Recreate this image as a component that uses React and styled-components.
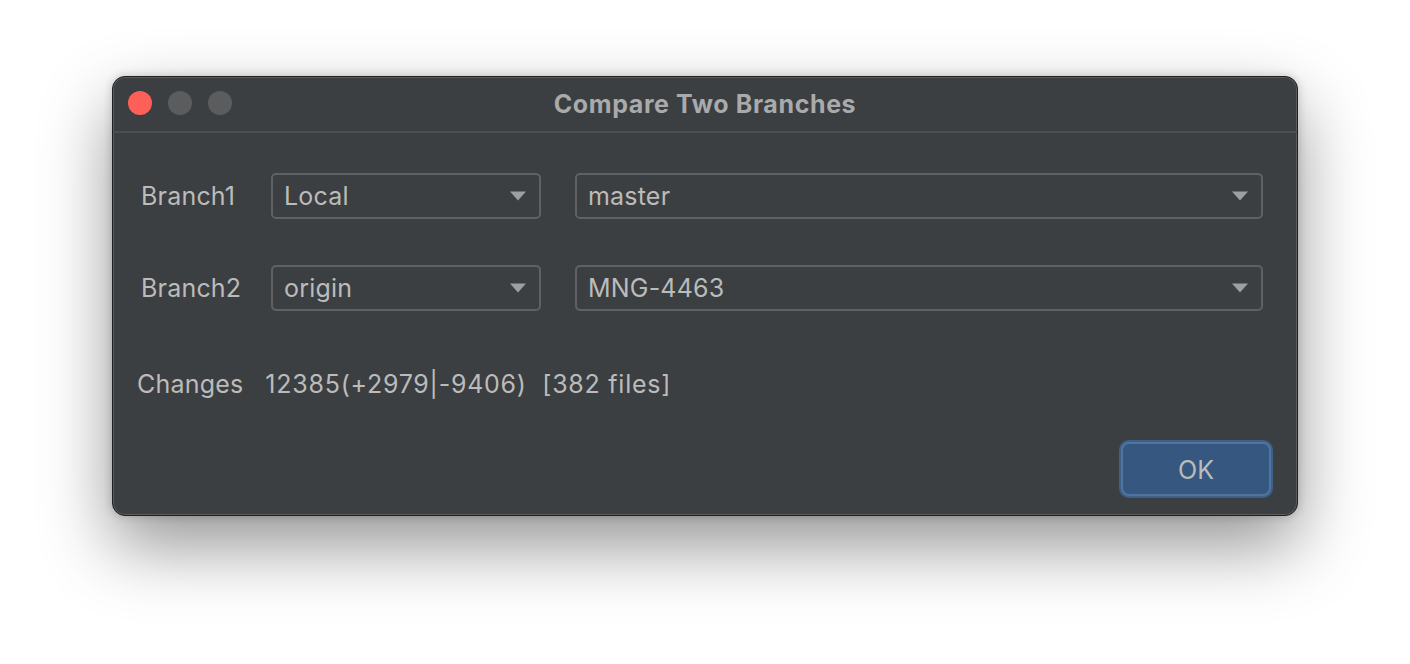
import React from 'react';
import styled, { createGlobalStyle } from 'styled-components';

const GlobalStyle = createGlobalStyle`
  html, body {
    margin: 0;
    padding: 0;
    background: #ffffff;
  }
  body {
    font-family: Inter, "Noto Sans", "Liberation Sans", sans-serif;
  }
`;

function Combo({ value }) {
  return (
    <ComboBox>
      <ComboValue>{value}</ComboValue>
      <Arrow viewBox="0 0 18 10">
        <path d="M1 0.5 H17 L9 9.5 Z" fill="#9c9fa3" />
      </Arrow>
    </ComboBox>
  );
}

function App() {
  return (
    <Page>
      <GlobalStyle />
      <Window>
        <TitleBar>
          <Lights>
            <Light color="#fe5f57" />
            <Light color="#5b5c5e" />
            <Light color="#5b5c5e" />
          </Lights>
          <Title>Compare Two Branches</Title>
        </TitleBar>
        <Body>
          <Form>
            <Label>Branch1</Label>
            <Combo value="Local" />
            <Combo value="master" />
            <Label>Branch2</Label>
            <Combo value="origin" />
            <Combo value="MNG-4463" />
          </Form>
          <Changes>
            <span>Changes</span>
            <span>12385(+2979|-9406)&nbsp;&nbsp;[382 files]</span>
          </Changes>
          <Footer>
            <OkButton>OK</OkButton>
          </Footer>
        </Body>
      </Window>
    </Page>
  );
}

export default App;

const Page = styled.div`
  padding: 76px 0 0 112px;
  height: 664px;
  box-sizing: border-box;
`;

const Window = styled.div`
  width: 1186px;
  height: 440px;
  box-sizing: border-box;
  background: #3c3f41;
  border: 1px solid #1e1f20;
  border-radius: 13px;
  box-shadow: inset 0 0 0 1px #5a5c5e, 0 30px 70px rgba(0, 0, 0, 0.42), 0 0 10px rgba(0, 0, 0, 0.2);
  display: flex;
  flex-direction: column;
  overflow: hidden;
`;

const TitleBar = styled.div`
  position: relative;
  height: 54px;
  flex: none;
  border-bottom: 2px solid #4c4e50;
  display: flex;
  align-items: center;
  justify-content: center;
`;

const Lights = styled.div`
  position: absolute;
  left: 15px;
  top: 14px;
  display: flex;
  gap: 16px;
`;

const Light = styled.div`
  width: 24px;
  height: 24px;
  border-radius: 50%;
  background: ${p => p.color};
`;

const Title = styled.div`
  color: #a9aaac;
  font-size: 25px;
  font-weight: 700;
  letter-spacing: 0.6px;
  margin-top: -1px;
`;

const Body = styled.div`
  flex: 1;
  display: flex;
  flex-direction: column;
  padding: 40px 34px 19px 24px;
`;

const Form = styled.div`
  display: grid;
  grid-template-columns: 96px 270px 1fr;
  column-gap: 34px;
  row-gap: 46px;
  align-items: center;
  padding-left: 4px;
`;

const Label = styled.div`
  color: #bbbbbb;
  font-size: 25px;
  letter-spacing: 0.2px;
  white-space: nowrap;
`;

const ComboBox = styled.div`
  height: 46px;
  box-sizing: border-box;
  border: 2px solid #5f6164;
  border-radius: 5px;
  display: flex;
  align-items: center;
  justify-content: space-between;
  padding: 0 12px 0 11px;
`;

const ComboValue = styled.span`
  color: #bbbbbb;
  font-size: 25px;
  letter-spacing: 0.2px;
`;

const Arrow = styled.svg`
  width: 18px;
  height: 10px;
`;

const Changes = styled.div`
  margin-top: 58px;
  color: #bbbbbb;
  font-size: 25px;
  letter-spacing: 0.2px;
  display: flex;
  gap: 22px;

  span + span {
    letter-spacing: 0.75px;
  }
`;

const Footer = styled.div`
  margin-top: auto;
  display: flex;
  justify-content: flex-end;
  margin-right: -8px;
`;

const OkButton = styled.button`
  width: 150px;
  height: 54px;
  box-sizing: border-box;
  background: #365880;
  border: 2px solid #4f74a0;
  border-radius: 8px;
  box-shadow: 0 0 0 2px #3e6188;
  color: #bbbbbb;
  font-family: Inter, "Noto Sans", sans-serif;
  font-size: 25px;
  padding-top: 3px;
`;
